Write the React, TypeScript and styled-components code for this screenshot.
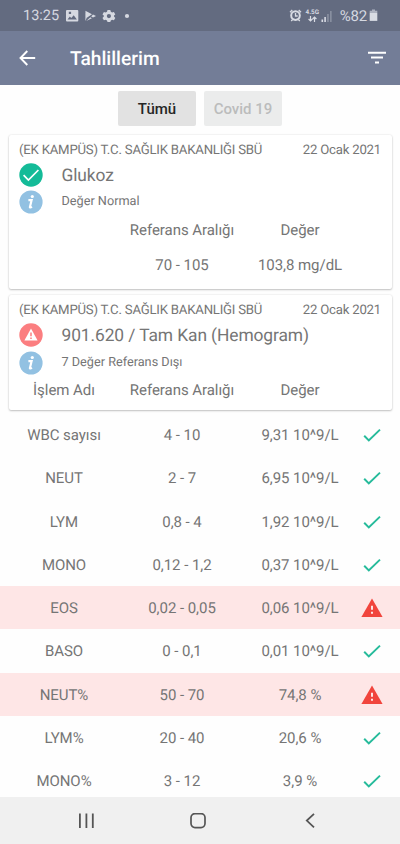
import styled, { createGlobalStyle } from 'styled-components';

const results = [
  { name: 'WBC sayısı', range: '4 - 10', value: '9,31 10^9/L', alert: false },
  { name: 'NEUT', range: '2 - 7', value: '6,95 10^9/L', alert: false },
  { name: 'LYM', range: '0,8 - 4', value: '1,92 10^9/L', alert: false },
  { name: 'MONO', range: '0,12 - 1,2', value: '0,37 10^9/L', alert: false },
  { name: 'EOS', range: '0,02 - 0,05', value: '0,06 10^9/L', alert: true },
  { name: 'BASO', range: '0 - 0,1', value: '0,01 10^9/L', alert: false },
  { name: 'NEUT%', range: '50 - 70', value: '74,8 %', alert: true },
  { name: 'LYM%', range: '20 - 40', value: '20,6 %', alert: false },
  { name: 'MONO%', range: '3 - 12', value: '3,9 %', alert: false },
];

const hospital = '(EK KAMPÜS) T.C. SAĞLIK BAKANLIĞI SBÜ';

const CheckCircle = () => (
  <svg width="24" height="24" viewBox="0 0 24 24">
    <circle cx="12" cy="12" r="11.7" fill="#14bb98" />
    <path d="M4.6 12.2l4.8 4.8L19.4 7" fill="none" stroke="#fff" strokeWidth="1.7" />
  </svg>
);

const WarningCircle = () => (
  <svg width="24" height="24" viewBox="0 0 24 24">
    <circle cx="12" cy="12" r="11.7" fill="#fb7e80" />
    <path d="M12 5.6l6.6 11.8H5.4z" fill="#fff" />
    <path d="M12 9.4v3.8M12 14.5v1.5" stroke="#fb7e80" strokeWidth="1.5" />
  </svg>
);

const InfoCircle = () => (
  <svg width="24" height="24" viewBox="0 0 24 24">
    <circle cx="12" cy="12" r="11.6" fill="#92c1e2" />
    <circle cx="13.3" cy="6.5" r="1.6" fill="#fff" />
    <path d="M9.4 10.2h3.2l-1.7 6.9c-.1.7.7.5 2-.4" fill="none" stroke="#fff" strokeWidth="2.2" />
  </svg>
);

const Check = () => (
  <svg width="24" height="24" viewBox="0 0 24 24">
    <path d="M4.2 12.8l4.6 4.6L20 6.6" fill="none" stroke="#26bb9b" strokeWidth="2" />
  </svg>
);

const Warning = () => (
  <svg width="24" height="24" viewBox="0 0 24 24">
    <path d="M12 2.6L22.6 21H1.4z" fill="#f1453d" />
    <path d="M12 9.8v4M12 15.8v2" stroke="#fde6e6" strokeWidth="2" />
  </svg>
);

const App = () => (
  <Screen>
    <GlobalStyle />
    <StatusBar>
      <Clock>13:25</Clock>
      <svg width="65" height="14" viewBox="0 0 65 14" fill="#d6d9e1">
        <path fillRule="evenodd" d="M1 1h10.3a1 1 0 0 1 1 1v9.5a1 1 0 0 1-1 1H1a1 1 0 0 1-1-1V2a1 1 0 0 1 1-1zM1.5 10.5h9.4L7.7 6.2 5.3 9 3.8 7.5zM2.8 2.8v2.3h2.3V2.8z" />
        <path d="M19.4 1.7L26 5.2l-5.9 4zM19.4 3.5l2.2 3.2-2.2 5.3zM27 5.5l3 1.6-3 1.5-1.8-1.2zM24.4 8.2l1.5 1-5.7 2.8z" />
        <path fillRule="evenodd" d="M41.5 1h2.8l.5 1.8 1.3.8 1.8-.5 1.4 2.3L48 6.6v1l1.3 1.3-1.4 2.3-1.8-.5-1.3.8-.5 1.6h-2.8l-.5-1.6-1.3-.8-1.8.5-1.4-2.3 1.3-1.3v-1l-1.3-1.2 1.4-2.3 1.8.5 1.3-.8zm1.4 4a2.1 2.1 0 1 0 .01 4.2 2.1 2.1 0 0 0-.01-4.2z" />
        <circle cx="61" cy="7" r="2.1" />
      </svg>
      <Spacer />
      <svg width="13" height="13" viewBox="0 0 13 13" fill="none" stroke="#d9dce4">
        <circle cx="6.5" cy="6.6" r="4.3" strokeWidth="2" />
        <path d="M6.5 4v3h2.2M1 3.2L3.3 1M12 3.2L9.7 1M2.2 12l1.5-1.5M10.8 12l-1.5-1.5" strokeWidth="1.3" />
      </svg>
      <Network>
        4.5G
        <svg width="9" height="6" viewBox="0 0 9 6" fill="none" stroke="#d9dce4" strokeWidth="1.2">
          <path d="M2.5 0v5M.6 3l1.9 2 1.9-2M6.5 6V1M4.6 3l1.9-2 1.9 2" />
        </svg>
      </Network>
      <svg width="11" height="12" viewBox="0 0 11 12">
        <path d="M.5 9.5h1.6V12H.5zM3.3 7h1.6v5H3.3z" fill="#d9dce4" />
        <path d="M6.2 4h1.5v8H6.2zM9.1 1h1.5v11H9.1z" fill="#8d93a4" />
      </svg>
      <Battery>%82</Battery>
      <svg width="9" height="13" viewBox="0 0 9 13">
        <path d="M3 .5h3v1.2h2.3v2H.7v-2H3z" fill="#aeb3c1" />
        <path d="M.7 3.7h7.6v8.2H.7z" fill="#d9dce4" />
      </svg>
    </StatusBar>
    <AppBar>
      <svg width="18" height="18" viewBox="0 0 18 18" fill="none" stroke="#fff" strokeWidth="1.9">
        <path d="M16.2 9H2M8.3 2L1.5 9l6.8 7" />
      </svg>
      <Title>Tahlillerim</Title>
      <svg width="18" height="14" viewBox="0 0 18 14" fill="#fff">
        <path d="M0 .8h18v2H0zM3 5.6h12v2H3zM7 10.4h4v2H7z" />
      </svg>
    </AppBar>
    <Filters>
      <FilterButton>Tümü</FilterButton>
      <FilterButton $muted>Covid 19</FilterButton>
    </Filters>
    <Card $height={154.5} $space={6}>
      <CardHead>
        <span>{hospital}</span>
        <span>22 Ocak 2021</span>
      </CardHead>
      <TestLine>
        <CheckCircle />
        <TestName>Glukoz</TestName>
      </TestLine>
      <InfoLine>
        <InfoCircle />
        <Note>Değer Normal</Note>
      </InfoLine>
      <Columns>
        <Cell />
        <Cell>Referans Aralığı</Cell>
        <Cell>Değer</Cell>
      </Columns>
      <Columns $gap={14}>
        <Cell />
        <Cell>70 - 105</Cell>
        <Cell>103,8 mg/dL</Cell>
      </Columns>
    </Card>
    <Card $height={114.5} $space={3.3}>
      <CardHead>
        <span>{hospital}</span>
        <span>22 Ocak 2021</span>
      </CardHead>
      <TestLine>
        <WarningCircle />
        <TestName>901.620 / Tam Kan (Hemogram)</TestName>
      </TestLine>
      <InfoLine>
        <InfoCircle />
        <Note>7 Değer Referans Dışı</Note>
      </InfoLine>
      <Columns $gap={4.5}>
        <Cell>İşlem Adı</Cell>
        <Cell>Referans Aralığı</Cell>
        <Cell>Değer</Cell>
      </Columns>
    </Card>
    <List>
      {results.map((r) => (
        <Row key={r.name} $alert={r.alert}>
          <Cell>{r.name}</Cell>
          <Cell>{r.range}</Cell>
          <Cell>{r.value}</Cell>
          <RowIcon>{r.alert ? <Warning /> : <Check />}</RowIcon>
        </Row>
      ))}
    </List>
    <NavBar>
      <svg width="16" height="16" viewBox="0 0 16 16" stroke="#555" strokeWidth="1.8">
        <path d="M1.9 .5v14.5M8.4 .5v14.5M14.8 .5v14.5" />
      </svg>
      <svg width="16" height="16" viewBox="0 0 16 16" fill="none" stroke="#555" strokeWidth="1.7">
        <rect x="1" y=".6" width="14" height="14" rx="4" />
      </svg>
      <svg width="16" height="16" viewBox="0 0 16 16" fill="none" stroke="#555" strokeWidth="1.8">
        <path d="M12 .8L4.8 7.6l7.2 6.8" />
      </svg>
    </NavBar>
  </Screen>
);

const GlobalStyle = createGlobalStyle`
  * {
    box-sizing: border-box;
  }

  body {
    margin: 0;
    background: #fefefe;
    font-family: Roboto, sans-serif;
    color: #757575;
    text-rendering: geometricPrecision;
  }

  svg {
    display: block;
    flex: none;
  }
`;

const Screen = styled.div`
  display: flex;
  flex-direction: column;
  width: 400px;
  height: 844px;
  overflow: hidden;
`;

const StatusBar = styled.div`
  display: flex;
  align-items: center;
  height: 31px;
  flex: none;
  padding: 0 22px 0 23px;
  background: #636b80;
  color: #d6d9e1;
`;

const Clock = styled.span`
  width: 43px;
  font-size: 14.5px;
`;

const Spacer = styled.div`
  flex: 1;
`;

const Network = styled.div`
  display: flex;
  flex-direction: column;
  align-items: center;
  width: 13px;
  margin: 0 2px 0 4px;
  font-size: 6.3px;
  font-weight: 700;
  line-height: 7px;
`;

const Battery = styled.span`
  margin: 0 2px 0 8px;
  font-size: 15px;
  letter-spacing: -0.2px;
`;

const AppBar = styled.div`
  display: flex;
  align-items: center;
  height: 54px;
  flex: none;
  padding: 0 14px 0 19px;
  background: #737d97;
`;

const Title = styled.div`
  flex: 1;
  margin-left: 33px;
  color: #fff;
  font-size: 19.2px;
  font-weight: 500;
`;

const Filters = styled.div`
  display: flex;
  justify-content: center;
  gap: 8px;
  flex: none;
  padding: 6px 0 8.5px;
`;

const FilterButton = styled.button<{ $muted?: boolean }>`
  width: 78px;
  height: 35px;
  padding: 0;
  border: none;
  border-radius: 2px;
  background: ${(p) => (p.$muted ? '#ebecec' : '#e2e2e2')};
  color: ${(p) => (p.$muted ? '#bbbcbc' : '#252525')};
  font: 500 15px Roboto, sans-serif;
`;

const Card = styled.section<{ $height: number; $space: number }>`
  flex: none;
  height: ${(p) => p.$height}px;
  margin: 0 8.5px ${(p) => p.$space}px;
  padding: 5px 0 0;
  border-radius: 2px;
  background: #fff;
  box-shadow: 0 1px 2px rgba(0, 0, 0, 0.22), 0 0 2px rgba(0, 0, 0, 0.12);
`;

const CardHead = styled.div`
  display: flex;
  justify-content: space-between;
  height: 20px;
  padding: 1px 10.5px 0 10.5px;
  font-size: 13.2px;
  letter-spacing: -0.22px;
  line-height: 20px;
  white-space: nowrap;
`;

const TestLine = styled.div`
  display: flex;
  align-items: center;
  gap: 19px;
  height: 30px;
  padding-left: 10px;
`;

const TestName = styled.h2`
  margin: 0;
  padding-top: 2px;
  font-size: 17.4px;
  font-weight: 400;
  letter-spacing: -0.1px;
`;

const InfoLine = styled.div`
  display: flex;
  align-items: center;
  gap: 19px;
  height: 25px;
  padding-left: 10px;
`;

const Note = styled.div`
  margin-top: -1px;
  font-size: 12.7px;
`;

const Columns = styled.div<{ $gap?: number }>`
  display: grid;
  grid-template-columns: repeat(3, 118px);
  align-items: center;
  height: 21px;
  margin: ${(p) => p.$gap ?? 5}px 0 0 -3.5px;
`;

const Cell = styled.div`
  font-size: 15px;
  letter-spacing: -0.05px;
  text-align: center;
  white-space: nowrap;
`;

const List = styled.div`
  flex: 1;
  min-height: 0;
  overflow: hidden;
`;

const Row = styled.div<{ $alert: boolean }>`
  display: grid;
  grid-template-columns: repeat(3, 118px) 26px;
  align-items: center;
  height: 43.3px;
  padding: 1px 0 0 5px;
  background: ${(p) => (p.$alert ? '#fee6e6' : 'transparent')};
`;

const RowIcon = styled.div`
  display: flex;
  justify-content: center;
`;

const NavBar = styled.nav`
  display: flex;
  gap: 96px;
  flex: none;
  height: 47px;
  padding: 16px 0 0 78px;
  background: #f0f0f0;
`;

export default App;
